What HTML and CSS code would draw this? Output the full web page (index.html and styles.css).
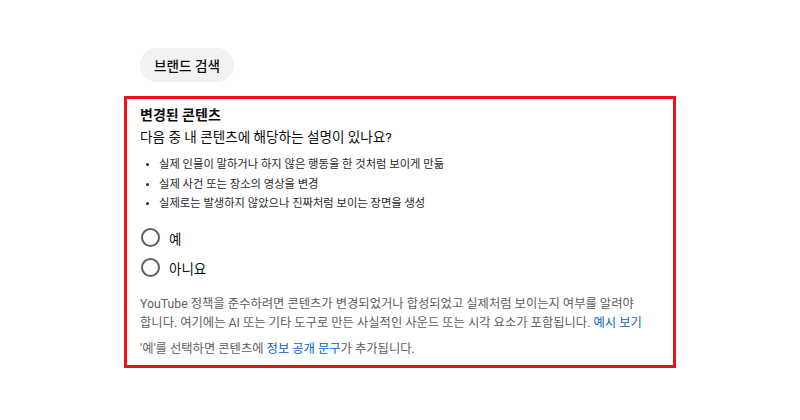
FILE: index.html
```html
<!DOCTYPE html>
<html lang="ko">
<head>
  <meta charset="utf-8">
  <title>변경된 콘텐츠</title>
  <link rel="stylesheet" href="styles.css">
</head>
<body>
  <div class="chip-row">
    <span class="chip">브랜드 검색</span>
  </div>

  <div class="altered-box">
    <div class="title">변경된 콘텐츠</div>
    <div class="question">다음 중 내 콘텐츠에 해당하는 설명이 있나요?</div>
    <ul class="cases">
      <li>실제 인물이 말하거나 하지 않은 행동을 한 것처럼 보이게 만듦</li>
      <li>실제 사건 또는 장소의 영상을 변경</li>
      <li>실제로는 발생하지 않았으나 진짜처럼 보이는 장면을 생성</li>
    </ul>

    <div class="radios">
      <label class="radio"><span class="ring"></span>예</label>
      <label class="radio"><span class="ring"></span>아니요</label>
    </div>

    <p class="note">YouTube 정책을 준수하려면 콘텐츠가 변경되었거나 합성되었고 실제처럼 보이는지 여부를 알려야<br>합니다. 여기에는 AI 또는 기타 도구로 만든 사실적인 사운드 또는 시각 요소가 포함됩니다. <a href="#">예시 보기</a></p>
    <p class="note last">'예'를 선택하면 콘텐츠에 <a href="#">정보 공개 문구</a>가 추가됩니다.</p>
  </div>
</body>
</html>
```

FILE: styles.css
```css
body {
  margin: 0;
  background-color: white;
  font-family: Roboto, "Noto Sans CJK KR", sans-serif;
  color: #0f0f0f;
}
.chip-row {
  padding: 48px 0 0 140px;
  height: 48px;
}
.chip {
  display: inline-flex;
  align-items: center;
  height: 34px;
  padding: 0 14px;
  border-radius: 17px;
  background-color: #f2f2f2;
  font-size: 13.6px;
  font-weight: 500;
}
.altered-box {
  margin-left: 124px;
  width: 533px;
  height: 266px;
  border: 3px solid #e8141b;
  padding: 0 0 0 13px;
}
.title {
  margin-top: 6px;
  font-size: 14px;
  font-weight: 700;
  line-height: 20px;
}
.question {
  font-size: 13.6px;
  line-height: 24px;
}
.cases {
  margin: 6px 0 0 0;
  padding-left: 19px;
  font-size: 11.3px;
  line-height: 19.5px;
  color: #282828;
}
.cases li::marker {
  font-size: 10px;
}
.radios {
  margin-top: 9px;
}
.radio {
  display: flex;
  align-items: center;
  height: 30px;
  font-size: 13.5px;
}
.ring {
  width: 15px;
  height: 15px;
  border: 2px solid #606060;
  border-radius: 50%;
  margin: 0 9px 0 1px;
}
.note {
  margin: 12px 0 0 0;
  width: 520px;
  font-size: 12.3px;
  line-height: 19px;
  color: #606060;
  word-break: keep-all;
}
.note.last {
  margin-top: 7px;
}
.note a {
  color: #065fd4;
  text-decoration: none;
}
```
